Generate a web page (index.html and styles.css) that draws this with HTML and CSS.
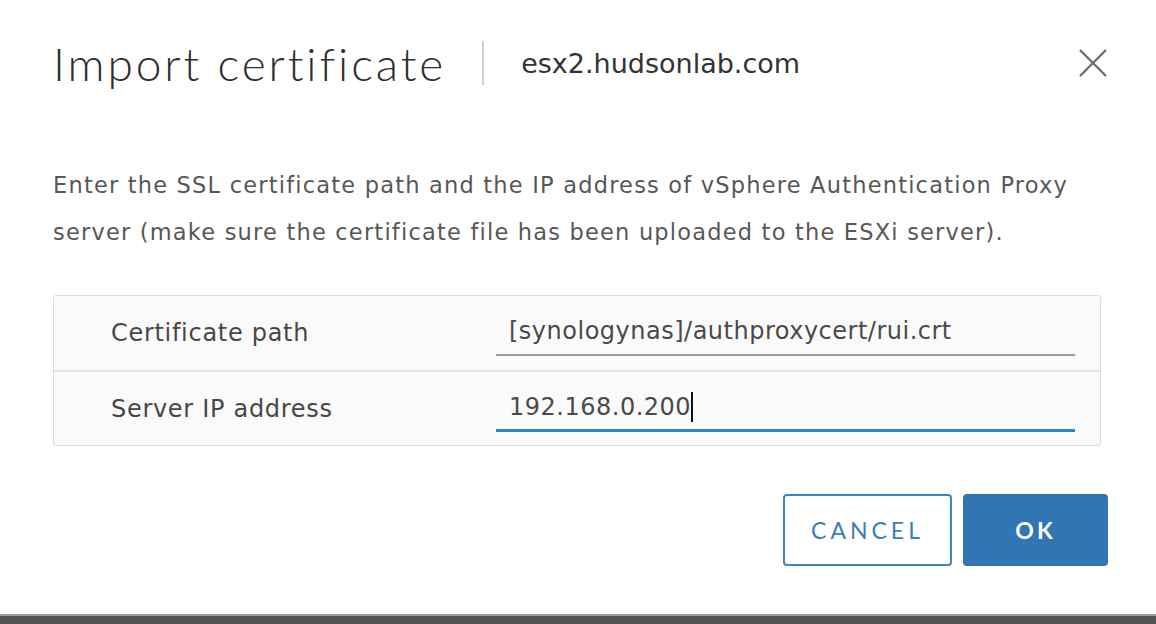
FILE: index.html
```html
<!DOCTYPE html>
<html lang="en">
<head>
    <meta charset="UTF-8">
    <meta name="viewport" content="width=device-width, initial-scale=1.0">
    <title>Import certificate</title>
    <link rel="stylesheet" href="styles.css">
</head>
<body>
    <div class="modal">
        <div class="modal-header">
            <h1 class="modal-title">Import certificate</h1>
            <span class="modal-divider"></span>
            <span class="modal-host">esx2.hudsonlab.com</span>
            <button class="close-btn" aria-label="Close">
                <svg width="30" height="30" viewBox="0 0 30 30">
                    <path d="M2 2 L28 28 M28 2 L2 28" stroke="#6a6a6a" stroke-width="2.2" fill="none"/>
                </svg>
            </button>
        </div>

        <p class="modal-text">Enter the SSL certificate path and the IP address of vSphere Authentication Proxy server (make sure the certificate file has been uploaded to the ESXi server).</p>

        <div class="form-box">
            <div class="form-row">
                <label class="form-label">Certificate path</label>
                <div class="form-input">[synologynas]/authproxycert/rui.crt</div>
            </div>
            <div class="form-row">
                <label class="form-label">Server IP address</label>
                <div class="form-input focused">192.168.0.200<span class="caret"></span></div>
            </div>
        </div>

        <div class="modal-footer">
            <button class="btn btn-outline">CANCEL</button>
            <button class="btn btn-primary">OK</button>
        </div>
    </div>
    <div class="taskbar"></div>
</body>
</html>
```

FILE: styles.css
```css
/* General Styles */
body {
    font-family: 'DejaVu Sans', 'Noto Sans', sans-serif;
    background-color: #fff;
    color: #333;
    margin: 0;
    padding: 0;
    height: 624px;
    display: flex;
    flex-direction: column;
    overflow: hidden;
}

.modal {
    flex: 1;
    padding: 0 48px 0 53px;
}

/* Header */
.modal-header {
    display: flex;
    align-items: center;
    height: 66px;
    padding-top: 30px;
}

.modal-title {
    font-family: 'Lato', sans-serif;
    font-size: 46px;
    font-weight: 300;
    color: #2e2e2e;
    margin: 0;
    letter-spacing: 2.9px;
}

.modal-divider {
    width: 2px;
    height: 44px;
    background: #cfcfcf;
    margin: 0 37px 0 36px;
}

.modal-host {
    font-size: 27px;
    color: #333;
    flex: 1;
}

.close-btn {
    background: none;
    border: none;
    padding: 0;
    cursor: pointer;
    display: flex;
}

/* Description */
.modal-text {
    font-size: 22.5px;
    line-height: 47px;
    letter-spacing: 1.2px;
    color: #575757;
    margin: 66px 0 0;
}

/* Form */
.form-box {
    margin-top: 39px;
    width: 1046px;
    background: #fafafa;
    border: 1px solid #dcdcdc;
    border-radius: 3px;
}

.form-row {
    display: flex;
    align-items: center;
    height: 74px;
}

.form-row + .form-row {
    border-top: 2px solid #e4e4e4;
    height: 73px;
}

.form-label {
    width: 385px;
    padding-left: 57px;
    font-size: 24px;
    letter-spacing: 0.7px;
    color: #474747;
}

.form-input {
    width: 579px;
    padding-left: 13px;
    height: 44px;
    line-height: 38px;
    font-size: 24px;
    letter-spacing: 0.5px;
    color: #4a4a4a;
    border-bottom: 2px solid #9b9b9b;
    box-sizing: border-box;
    margin-top: 2px;
}

.form-input.focused {
    border-bottom: 3px solid #2f86c9;
}

.caret {
    display: inline-block;
    width: 2px;
    height: 30px;
    background: #111;
    vertical-align: -7px;
}

/* Buttons */
.modal-footer {
    display: flex;
    justify-content: flex-end;
    gap: 11px;
    margin-top: 48px;
}

.btn {
    height: 72px;
    border-radius: 4px;
    font-family: 'Lato', sans-serif;
    font-size: 23px;
    letter-spacing: 4px;
    cursor: pointer;
}

.btn-outline {
    width: 169px;
    background: #fff;
    border: 2px solid #3a86c2;
    color: #3a7fb8;
}

.btn-primary {
    width: 145px;
    background: #3176b2;
    border: none;
    color: #fff;
    font-weight: 700;
    letter-spacing: 3px;
}

.taskbar {
    height: 8px;
    background: #545454;
    border-top: 2px solid #9a9a9a;
}
```
